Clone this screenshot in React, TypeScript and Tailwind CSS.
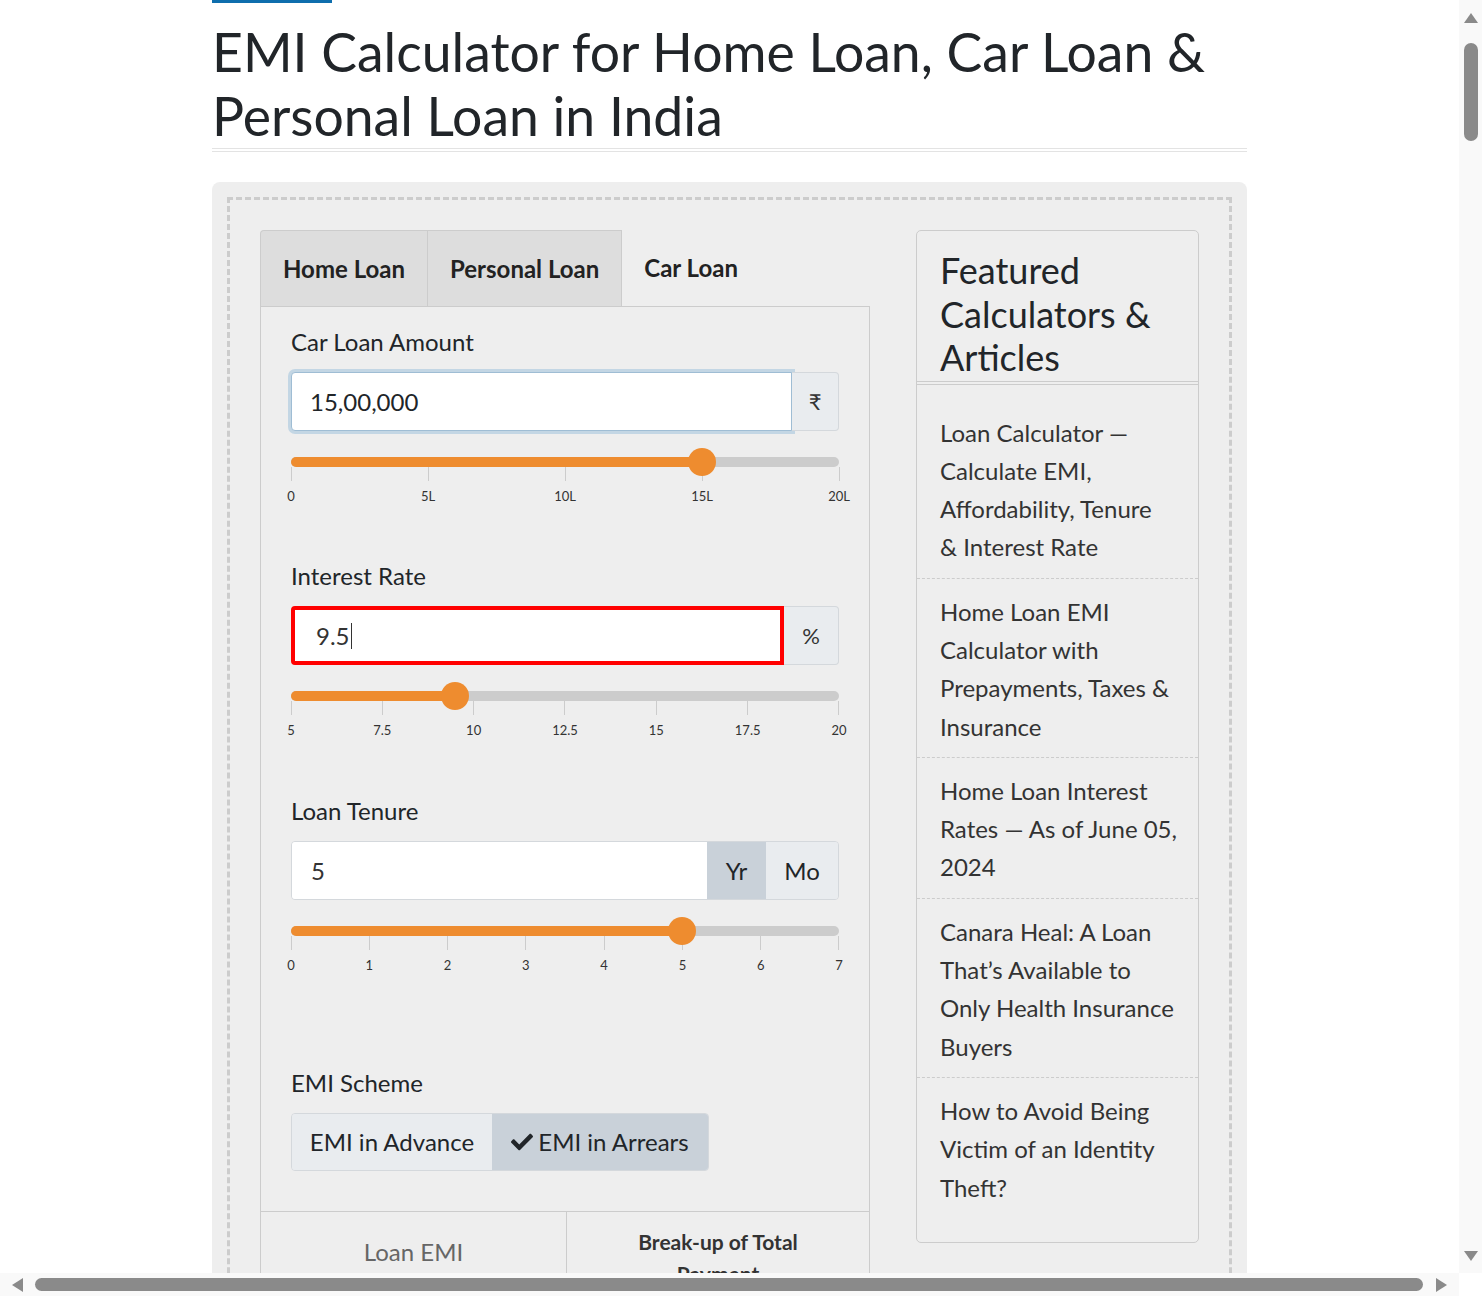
import React from "react";
import { FaCheck } from "react-icons/fa";

const Slider = ({ pct, ticks }: { pct: number; ticks: string[] }) => (
  <div className="mt-[26px]">
    <div className="relative h-[10px] rounded-full bg-[#cccccc]">
      <div
        className="h-full rounded-full bg-[#ee8c2f]"
        style={{ width: `${pct}%` }}
      />
      <div
        className="absolute top-1/2 size-[28px] -translate-x-1/2 -translate-y-1/2 rounded-full bg-[#ee8c2f]"
        style={{ left: `${pct}%` }}
      />
    </div>
    <div className="flex justify-between">
      {ticks.map((t) => (
        <div key={t} className="flex w-0 flex-col items-center">
          <div className="h-[14px] w-px bg-[#cccccc]" />
          <span className="mt-[7px] whitespace-nowrap text-[13px] leading-[16px] text-[#333333]">
            {t}
          </span>
        </div>
      ))}
    </div>
  </div>
);

const Label = ({ children }: { children: React.ReactNode }) => (
  <div className="mb-[14px] text-[24px] leading-[32px] text-[#212529]">
    {children}
  </div>
);

// line breaks kept as in the original sidebar
const featured = [
  ["Loan Calculator —", "Calculate EMI,", "Affordability, Tenure", "& Interest Rate"],
  ["Home Loan EMI", "Calculator with", "Prepayments, Taxes &", "Insurance"],
  ["Home Loan Interest", "Rates — As of June 05,", "2024"],
  ["Canara Heal: A Loan", "That’s Available to", "Only Health Insurance", "Buyers"],
  ["How to Avoid Being", "Victim of an Identity", "Theft?"],
];

export default function App() {
  return (
    <div className="flex h-[1296px] w-[1482px] flex-col overflow-hidden bg-white font-[Lato,'Liberation_Sans',sans-serif] text-[#212529]">
      <div className="flex min-h-0 flex-1">
        {/* page */}
        <div className="min-w-0 flex-1 overflow-hidden">
          <div className="mx-auto w-[1035px]">
            <div className="h-[3px] w-[120px] bg-[#0e6ead]" />
            <h1 className="mt-[16px] border-b-4 border-double border-[#e3e3e3] pb-px text-[53.5px] font-normal leading-[64px] text-[#212529]">
              EMI Calculator for Home Loan, Car Loan &amp; Personal Loan in India
            </h1>

            <div className="mt-[30px] rounded-[8px] bg-[#eeeeee] p-[15px]">
              <div className="flex justify-between border-[3px] border-dashed border-[#cccccc] p-[30px]">
                {/* calculator */}
                <div className="w-[610px]">
                  <div className="flex h-[76px]">
                    <div className="flex items-center rounded-tl-[4px] border border-b-0 border-[#cccccc] bg-[#dddddd] px-[22px] text-[24px] font-bold text-[#222222]">
                      Home Loan
                    </div>
                    <div className="flex items-center border border-b-0 border-l-0 border-[#cccccc] bg-[#dddddd] px-[22px] text-[24px] font-bold text-[#222222]">
                      Personal Loan
                    </div>
                    <div className="flex items-center px-[22px] text-[24px] font-bold text-[#222222]">
                      Car Loan
                    </div>
                  </div>
                  <div className="border border-[#cccccc]">
                    <div className="px-[30px] pb-[40px] pt-[19px]">
                      <Label>Car Loan Amount</Label>
                      <div className="flex h-[59px]">
                        <div className="flex flex-1 items-center rounded-l-[4px] border border-[#9fbdd4] bg-white pl-[18px] text-[24px] ring-[3px] ring-[#c3d6e4]">
                          15,00,000
                        </div>
                        <div className="flex w-[47px] items-center justify-center rounded-r-[4px] border border-l-0 border-[#d4d8dc] bg-[#e9ecef] text-[22px] text-[#333333]">
                          ₹
                        </div>
                      </div>
                      <Slider pct={75} ticks={["0", "5L", "10L", "15L", "20L"]} />

                      <div className="mt-[56px]">
                        <Label>Interest Rate</Label>
                      </div>
                      <div className="flex h-[59px]">
                        <div className="flex flex-1 items-center rounded-l-[4px] border-4 border-[#ff0000] bg-white pl-[21px] text-[24px] text-[#333333]">
                          9.5
                          <span className="ml-px h-[26px] w-px bg-[#333333]" />
                        </div>
                        <div className="flex w-[55px] items-center justify-center rounded-r-[4px] border border-l-0 border-[#d4d8dc] bg-[#e9ecef] text-[22px] text-[#333333]">
                          %
                        </div>
                      </div>
                      <Slider
                        pct={30}
                        ticks={["5", "7.5", "10", "12.5", "15", "17.5", "20"]}
                      />

                      <div className="mt-[57px]">
                        <Label>Loan Tenure</Label>
                      </div>
                      <div className="flex h-[59px] overflow-hidden rounded-[4px] border border-[#d4d8dc]">
                        <div className="flex flex-1 items-center bg-white pl-[19px] text-[24px] text-[#333333]">
                          5
                        </div>
                        <div className="flex w-[59px] items-center justify-center bg-[#c9d1d9] text-[24px] text-[#212529]">
                          Yr
                        </div>
                        <div className="flex w-[72px] items-center justify-center bg-[#e9ecef] text-[24px] text-[#212529]">
                          Mo
                        </div>
                      </div>
                      <Slider
                        pct={(5 / 7) * 100}
                        ticks={["0", "1", "2", "3", "4", "5", "6", "7"]}
                      />

                      <div className="mt-[94px]">
                        <Label>EMI Scheme</Label>
                      </div>
                      <div className="flex h-[58px] w-[418px] overflow-hidden rounded-[4px] border border-[#d4d8dc] text-[24px] text-[#212529]">
                        <div className="flex w-[200px] items-center justify-center bg-[#e9ecef]">
                          EMI in Advance
                        </div>
                        <div className="flex flex-1 items-center justify-center gap-[5px] bg-[#c9d1d9]">
                          <FaCheck className="size-[22px] text-[#212529]" />
                          EMI in Arrears
                        </div>
                      </div>
                    </div>
                    <div className="flex border-t border-[#cccccc]">
                      <div className="flex w-[305px] justify-center pt-[24px] text-[24px] leading-[32px] text-[#666666]">
                        Loan EMI
                      </div>
                      <div className="flex-1 border-l border-[#cccccc] px-[60px] pt-[14px] text-center text-[21px] font-bold leading-[32px] text-[#333333]">
                        Break-up of Total Payment
                      </div>
                    </div>
                    <div className="h-[300px]" />
                  </div>
                </div>

                {/* featured */}
                <div className="w-[283px] self-start rounded-[5px] border border-[#cccccc]">
                  <h3 className="border-b-4 border-double border-[#cccccc] px-[23px] pb-px pt-[18px] text-[36px] font-normal leading-[43.5px] text-[#212529]">
                    Featured Calculators &amp; Articles
                  </h3>
                  <ul className="pb-[24px] pt-[15px]">
                    {featured.map((lines, i) => (
                      <li
                        key={lines[0]}
                        className={
                          i < featured.length - 1
                            ? "border-b border-dashed border-[#cccccc] px-[23px] pb-[11px] pt-[14px] text-[24px] leading-[38.3px] text-[#333333]"
                            : "px-[23px] pb-[11px] pt-[14px] text-[24px] leading-[38.3px] text-[#333333]"
                        }
                      >
                        {lines.map((l) => (
                          <div key={l} className="whitespace-nowrap">
                            {l}
                          </div>
                        ))}
                      </li>
                    ))}
                  </ul>
                </div>
              </div>
            </div>
          </div>
        </div>

        {/* vertical scrollbar */}
        <div className="flex w-[23px] flex-col items-center bg-[#f9f9f9]">
          <svg className="mt-[13px]" width="14" height="10" viewBox="0 0 14 10">
            <polygon points="7,0 14,10 0,10" fill="#8a8a8a" />
          </svg>
          <div className="mt-[20px] h-[98px] w-[14px] rounded-full bg-[#8a8a8a]" />
          <div className="flex-1" />
          <svg className="mb-[12px]" width="14" height="10" viewBox="0 0 14 10">
            <polygon points="0,0 14,0 7,10" fill="#8a8a8a" />
          </svg>
        </div>
      </div>

      {/* horizontal scrollbar */}
      <div className="flex h-[23px]">
        <div className="flex flex-1 items-center bg-[#f9f9f9]">
          <svg className="ml-[12px]" width="11" height="14" viewBox="0 0 11 14">
            <polygon points="11,0 11,14 0,7" fill="#8a8a8a" />
          </svg>
          <div className="ml-[12px] h-[13px] w-[1388px] rounded-full bg-[#8a8a8a]" />
          <svg className="ml-[13px]" width="11" height="14" viewBox="0 0 11 14">
            <polygon points="0,0 11,7 0,14" fill="#8a8a8a" />
          </svg>
        </div>
        <div className="w-[23px] bg-white" />
      </div>
    </div>
  );
}
